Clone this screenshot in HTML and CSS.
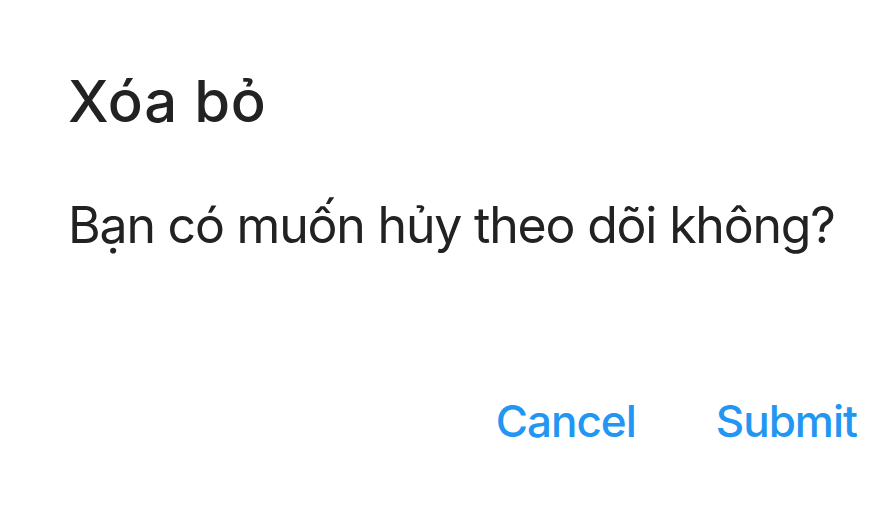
FILE: index.html
```html
<!DOCTYPE html>
<html lang="vi">
<head>
<meta charset="utf-8">
<link rel="stylesheet" href="styles.css">
</head>
<body>
<div class="dialog">
  <h1 class="title">Xóa bỏ</h1>
  <p class="message">Bạn có muốn hủy theo dõi không?</p>
  <div class="actions">
    <button class="btn">Cancel</button>
    <button class="btn">Submit</button>
  </div>
</div>
</body>
</html>
```
FILE: styles.css
```css
html, body {
  margin: 0;
  padding: 0;
  background: #ffffff;
}
.dialog {
  width: 892px;
  height: 517px;
  box-sizing: border-box;
  padding: 72px 35px 0 68px;
  display: flex;
  flex-direction: column;
  font-family: Inter, "Noto Sans", sans-serif;
  color: #222222;
}
.title {
  margin: 0;
  font-size: 58px;
  line-height: 1;
  font-weight: 500;
  letter-spacing: 0.8px;
}
.message {
  margin: 70px 0 0 0;
  font-size: 50px;
  line-height: 1;
  font-weight: 400;
  letter-spacing: -1.2px;
  white-space: nowrap;
}
.actions {
  margin-top: 149px;
  display: flex;
  justify-content: flex-end;
  gap: 80px;
}
.btn {
  border: 0;
  background: none;
  padding: 0;
  font-family: Inter, "Noto Sans", sans-serif;
  font-size: 44px;
  line-height: 1;
  font-weight: 500;
  letter-spacing: -1px;
  color: #2196f3;
}
```
